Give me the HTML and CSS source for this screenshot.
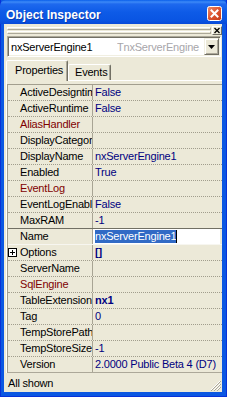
FILE: index.html
```html
<!DOCTYPE html>
<html>
<head>
<meta charset="utf-8">
<link rel="stylesheet" href="styles.css">
</head>
<body>
<div class="win">
  <div class="titlebar">
    <span class="title">Object Inspector</span>
    <span class="tclose"><svg width="15" height="15" viewBox="0 0 15 15"><defs><linearGradient id="cg" x1="0" y1="0" x2="1" y2="1"><stop offset="0" stop-color="#F0906C"/><stop offset="0.5" stop-color="#DD5430"/><stop offset="1" stop-color="#C23A17"/></linearGradient></defs><rect x="0.5" y="0.5" width="14" height="14" rx="2" fill="url(#cg)" stroke="#fff"/><path d="M4.5 4.5 L10.5 10.5 M10.5 4.5 L4.5 10.5" stroke="#fff" stroke-width="2" stroke-linecap="square"/></svg></span>
  </div>
  <div class="client">
    <div class="grabber">
      <div class="bars"><i></i><i></i></div>
      <span class="gclose"><svg width="8" height="7" viewBox="0 0 8 7"><path d="M1.5 1 L6.5 6 M6.5 1 L1.5 6" stroke="#000" stroke-width="1.3"/></svg></span>
    </div>
    <div class="combo">
      <span class="cname">nxServerEngine1</span>
      <span class="ctype">TnxServerEngine</span>
      <span class="cbtn"><svg width="7" height="4" viewBox="0 0 7 4"><path d="M0 0 H7 L3.5 4 Z" fill="#000"/></svg></span>
    </div>
    <div class="tabs">
      <span class="tab active">Properties</span>
      <span class="tab">Events</span>
    </div>
    <div class="sheet">
      <div class="grid">
        <div class="row"><div class="nm">ActiveDesigntimeEngine</div><div class="val">False</div></div>
        <div class="row"><div class="nm">ActiveRuntime</div><div class="val">False</div></div>
        <div class="row"><div class="nm ref">AliasHandler</div><div class="val"></div></div>
        <div class="row"><div class="nm">DisplayCategory</div><div class="val"></div></div>
        <div class="row"><div class="nm">DisplayName</div><div class="val">nxServerEngine1</div></div>
        <div class="row"><div class="nm">Enabled</div><div class="val">True</div></div>
        <div class="row"><div class="nm ref">EventLog</div><div class="val"></div></div>
        <div class="row"><div class="nm">EventLogEnabled</div><div class="val">False</div></div>
        <div class="row"><div class="nm">MaxRAM</div><div class="val">-1</div></div>
        <div class="row sel"><div class="nm">Name</div><div class="val"><div class="edit"><span class="hl">nxServerEngine1</span><span class="caret"></span></div></div></div>
        <div class="row"><div class="nm exp"><span class="plus"><svg width="9" height="9" viewBox="0 0 9 9"><rect x="0.5" y="0.5" width="8" height="8" fill="#fff" stroke="#000"/><path d="M2 4.5 H7 M4.5 2 V7" stroke="#000"/></svg></span>Options</div><div class="val b">[]</div></div>
        <div class="row"><div class="nm">ServerName</div><div class="val"></div></div>
        <div class="row"><div class="nm ref">SqlEngine</div><div class="val"></div></div>
        <div class="row"><div class="nm">TableExtension</div><div class="val b">nx1</div></div>
        <div class="row"><div class="nm">Tag</div><div class="val">0</div></div>
        <div class="row"><div class="nm">TempStorePath</div><div class="val"></div></div>
        <div class="row"><div class="nm">TempStoreSize</div><div class="val">-1</div></div>
        <div class="row last"><div class="nm">Version</div><div class="val">2.0000 Public Beta 4 (D7)</div></div>
      </div>
    </div>
    <div class="status">
      <span class="stext">All shown</span>
      <span class="sgrip"><svg width="11" height="11" viewBox="0 0 11 11"><path d="M10 1 L1 10 M10 4 L4 10 M10 7 L7 10" stroke="#fff" stroke-width="1"/><path d="M11 1 L1 11 M11 4 L4 11 M11 7 L7 11" stroke="#ACA899" stroke-width="1"/></svg></span>
    </div>
  </div>
</div>
</body>
</html>
```
FILE: styles.css
```css
* { box-sizing: border-box; margin: 0; padding: 0; }
html, body { width: 227px; height: 397px; overflow: hidden; }
body {
  font-family: "Liberation Sans", Arial, sans-serif;
  font-size: 11px;
  color: #000;
  background: #0B57E2;
}
.win {
  width: 227px;
  height: 397px;
  display: flex;
  flex-direction: column;
  background: #0B57E2;
  box-shadow: inset 1px 0 #0831D9, inset -1px 0 #0831D9, inset 0 -1px #0831D9;
}
.titlebar {
  height: 24px;
  flex: none;
  display: flex;
  align-items: flex-start;
  justify-content: space-between;
  padding: 0 5px 0 6px;
  background: linear-gradient(to bottom, #0A5FEA 0, #3D8AF7 2px, #1E69EE 4px, #0E5BE7 12px, #0A55E3 20px, #0849D8 24px);
  border-radius: 6px 6px 0 0;
}
.title {
  padding-top: 8px;
  line-height: 14px;
  font-size: 12px;
  font-weight: bold;
  color: #fff;
  text-shadow: 1px 1px 0 #0A3CB0;
}
.tclose { display: block; margin-top: 6px; width: 15px; height: 15px; }
.tclose svg { display: block; }

.client {
  flex: 1;
  margin: 0 5px 5px 4px;
  background: #ECE9D8;
  display: flex;
  flex-direction: column;
  letter-spacing: -0.2px;
}
.grabber {
  margin: 2px 0 0 3px;
  height: 9px;
  display: flex;
  gap: 1px;
}
.bars { width: 204px; padding-top: 1px; display: flex; flex-direction: column; gap: 1px; }
.bars i {
  display: block;
  height: 3px;
  border-top: 1px solid #fff;
  border-left: 1px solid #fff;
  border-bottom: 1px solid #ACA899;
  border-right: 1px solid #ACA899;
}
.gclose {
  width: 10px;
  height: 9px;
  border: 1px solid;
  border-color: #fff #716F64 #716F64 #fff;
  display: flex;
  align-items: center;
  justify-content: center;
}
.gclose svg { display: block; }

.combo {
  margin: 1px 0 0 3px;
  width: 214px;
  height: 21px;
  background: #fff;
  border: 1px solid;
  border-color: #ACA899 #fff #fff #ACA899;
  box-shadow: inset 1px 1px 0 #716F64, inset -1px -1px 0 #F1EFE2;
  padding: 1px 1px 1px 2px;
  display: flex;
  align-items: center;
}
.cname { width: 107px; flex: none; padding-left: 1px; }
.ctype { flex: 1; color: #A7A6AA; white-space: nowrap; overflow: hidden; }
.cbtn {
  width: 15px;
  height: 17px;
  flex: none;
  background: #ECE9D8;
  border: 1px solid;
  border-color: #F1EFE2 #716F64 #716F64 #F1EFE2;
  box-shadow: inset 1px 1px 0 #fff, inset -1px -1px 0 #ACA899;
  display: flex;
  align-items: center;
  justify-content: center;
}
.cbtn svg { display: block; }

.tabs {
  margin: 3px 0 0 2px;
  height: 20px;
  display: flex;
  align-items: flex-end;
  position: relative;
  z-index: 1;
}
.tab {
  height: 16px;
  width: 43px;
  line-height: 15px;
  padding: 0 0 0 6px;
  border: 1px solid;
  border-bottom: 0;
  border-color: #fff #716F64 transparent #fff;
  border-radius: 2px 2px 0 0;
  box-shadow: inset -1px 0 0 #ACA899;
}
.tab.active {
  height: 21px;
  margin-bottom: -1px;
  width: 62px;
  padding: 2px 0 0 8px;
  line-height: 15px;
  background: #ECE9D8;
}
.sheet {
  margin-left: 2px;
  border-top: 1px solid #fff;
  border-left: 1px solid #fff;
  padding-top: 3px;
}
.grid {
  border-top: 1px solid #A29E8E;
  border-left: 1px solid #A29E8E;
}
.row {
  display: flex;
  height: 16px;
  border-bottom: 1px dotted #A19D8D;
  line-height: 15px;
}
.nm {
  width: 85px;
  flex: none;
  padding-left: 12px;
  border-right: 1px solid #A8A494;
  white-space: nowrap;
  overflow: hidden;
}
.nm.ref { color: #800000; }
.nm.exp { padding-left: 0; display: flex; align-items: center; }
.plus { width: 12px; flex: none; display: flex; }
.plus svg { display: block; }
.val {
  flex: 1;
  padding-left: 2px;
  color: #000080;
  white-space: nowrap;
  overflow: hidden;
}
.val.b { font-weight: bold; }
.row.sel {
  margin-top: -1px;
  height: 17px;
  border-top: 1px solid #716F64;
  border-bottom: 1px solid #F7F6F0;
  position: relative;
}
.row.sel .val { padding: 0 2px 0 0; }
.edit {
  height: 15px;
  background: #fff;
  padding: 1px 0 0 2px;
  display: flex;
  align-items: flex-start;
}
.hl {
  background: #316AC5;
  color: #fff;
  line-height: 13px;
  height: 13px;
}
.caret { width: 1px; height: 13px; background: #000; }
.row.last { border-bottom: 1px solid #ACA899; }

.status {
  flex: 1;
  display: flex;
  justify-content: space-between;
  padding: 2px 0 0 4px;
  line-height: 17px;
}
.sgrip { align-self: flex-end; margin: 0 1px 1px 0; display: flex; }
.sgrip svg { display: block; }
```
